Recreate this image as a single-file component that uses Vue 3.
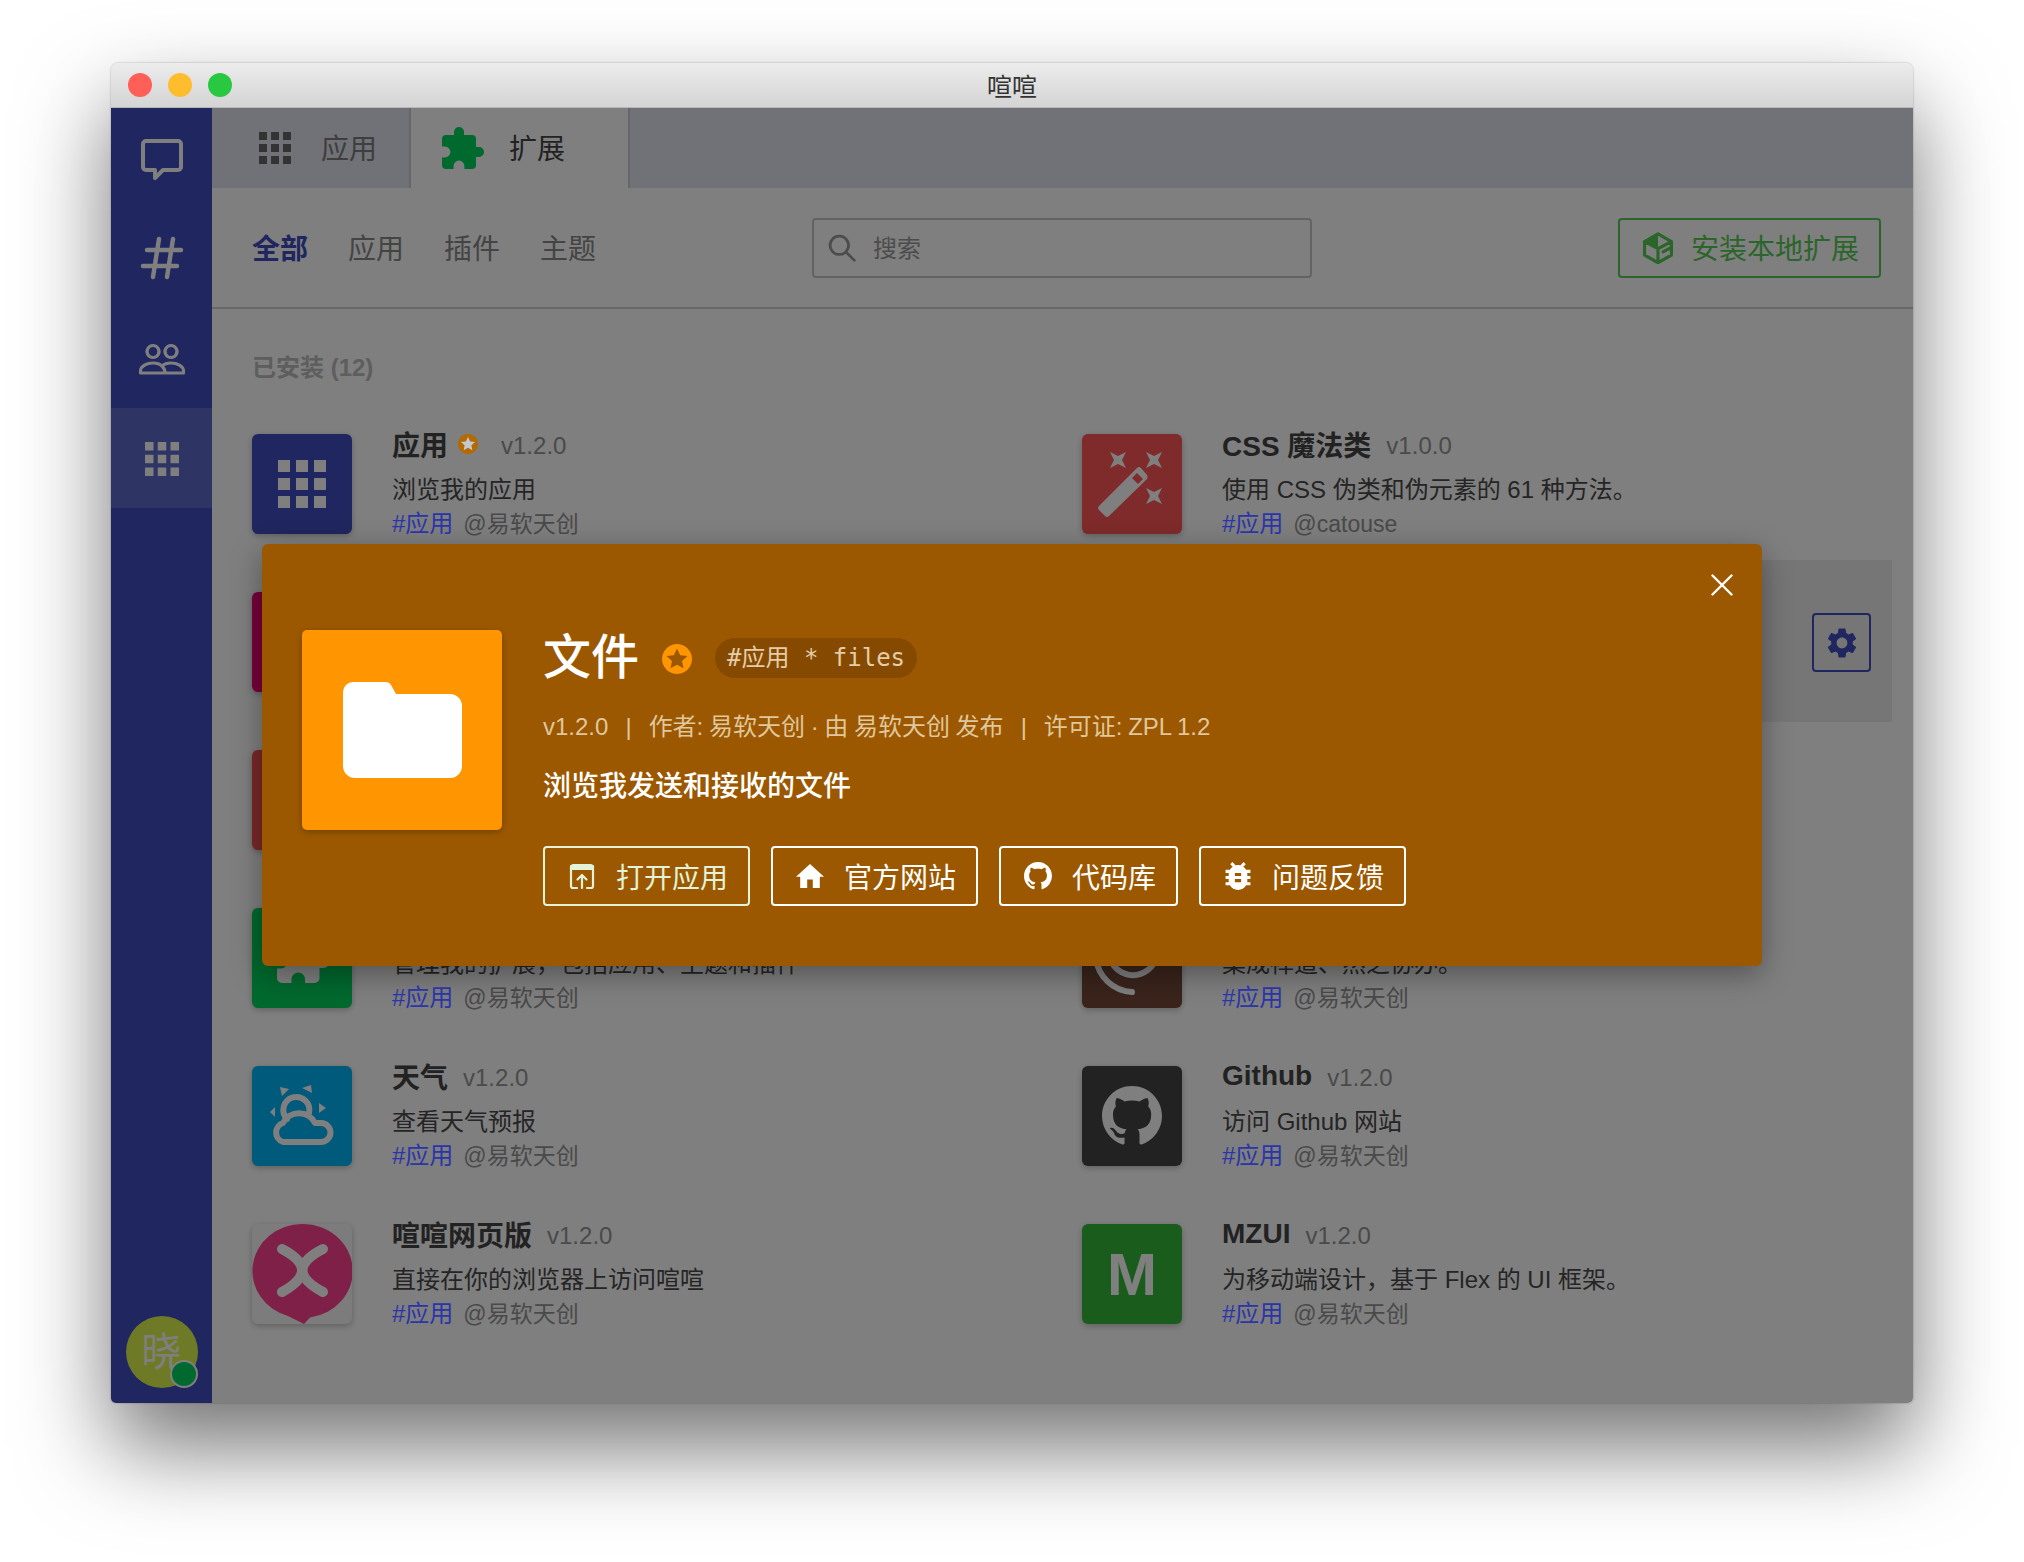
<template>
  <div class="page">
    <div class="window">
      <div class="titlebar">
        <div class="lights"><i class="red"></i><i class="yellow"></i><i class="green"></i></div>
        <span class="title">喧喧</span>
      </div>
      <div class="body">
        <nav class="side">
          <a v-for="n in ['chat', 'hash', 'users', 'grid']" :key="n" class="nav" :class="{ active: n === 'grid' }">
            <Icon :name="n" :class="n === 'grid' ? 'nav-grid' : 'nav-icon'" />
          </a>
          <div class="avatar">晓<span class="dot"></span></div>
        </nav>
        <main class="main">
          <div class="tabs">
            <a class="tab"><Icon name="grid" class="tab-grid" />应用</a>
            <a class="tab on"><Icon name="puzzle" class="tab-puzzle" />扩展</a>
          </div>
          <div class="bar">
            <div class="filters">
              <a v-for="(f, i) in filters" :key="f" :class="{ cur: i === 0 }">{{ f }}</a>
            </div>
            <label class="search">
              <Icon name="search" class="search-icon" />
              <input placeholder="搜索" />
            </label>
            <a class="install"><Icon name="cube" class="cube" />安装本地扩展</a>
          </div>
          <div class="content">
            <h3>已安装 (12)</h3>
            <div class="grid">
              <div v-for="item in items" :key="item.name" class="card" :class="{ hover: item.hover }">
                <div class="app" :style="{ background: item.color }">
                  <Icon :name="item.icon" :class="item.size" />
                  <b v-if="item.letter">{{ item.letter }}</b>
                </div>
                <div class="info">
                  <div class="line">
                    <strong>{{ item.name }}</strong>
                    <Icon v-if="item.star" name="star" class="star" />
                    <span class="ver" :class="{ gap: item.star }">{{ item.ver }}</span>
                  </div>
                  <p>{{ item.desc }}</p>
                  <div class="tags"><a :class="{ lift: !item.covered }">#应用</a><span>@{{ item.by }}</span></div>
                </div>
                <a v-if="item.hover" class="gear"><Icon name="gear" class="gear-icon" /></a>
              </div>
            </div>
          </div>
        </main>
        <div class="mask">
          <div class="dialog">
            <a class="close"><Icon name="close" class="close-icon" /></a>
            <div class="big"><Icon name="folder" class="folder" /></div>
            <div class="detail">
              <div class="head">
                <h2>文件</h2>
                <Icon name="star" class="dstar" />
                <code>#应用 * files</code>
              </div>
              <div class="meta">
                <span>v1.2.0</span><i>|</i><span>作者: 易软天创 · 由 易软天创 发布</span><i>|</i><span>许可证: ZPL 1.2</span>
              </div>
              <div class="desc">浏览我发送和接收的文件</div>
              <div class="actions">
                <a v-for="b in buttons" :key="b.text" class="btn" :class="{ first: b.icon === 'open' }">
                  <Icon :name="b.icon" class="btn-icon" />{{ b.text }}
                </a>
              </div>
            </div>
          </div>
        </div>
      </div>
    </div>
  </div>
</template>

<script setup>
import { h } from 'vue'

const grid = 'M0 0h6v6H0zM9 0h6v6H9zM18 0h6v6h-6zM0 9h6v6H0zM9 9h6v6H9zM18 9h6v6h-6zM0 18h6v6H0zM9 18h6v6H9zM18 18h6v6h-6z'
const github = 'M8 0C3.58 0 0 3.58 0 8c0 3.54 2.29 6.53 5.47 7.59.4.07.55-.17.55-.38 0-.19-.01-.82-.01-1.49-2.01.37-2.53-.49-2.69-.94-.09-.23-.48-.94-.82-1.13-.28-.15-.68-.52-.01-.53.63-.01 1.08.58 1.23.82.72 1.21 1.87.87 2.33.66.07-.52.28-.87.51-1.07-1.78-.2-3.64-.89-3.64-3.95 0-.87.31-1.59.82-2.15-.08-.2-.36-1.02.08-2.12 0 0 .67-.21 2.2.82.64-.18 1.32-.27 2-.27.68 0 1.36.09 2 .27 1.53-1.04 2.2-.82 2.2-.82.44 1.1.16 1.92.08 2.12.51.56.82 1.27.82 2.15 0 3.07-1.87 3.75-3.65 3.95.29.25.54.73.54 1.48 0 1.07-.01 1.93-.01 2.2 0 .21.15.46.55.38A8.013 8.013 0 0016 8c0-4.42-3.58-8-8-8z'
const puzzle = 'M20.5 11H19V7a2 2 0 0 0-2-2h-4V3.5a2.5 2.5 0 0 0-5 0V5H4a2 2 0 0 0-2 2v3.8h1.5a2.7 2.7 0 0 1 0 5.4H2V20a2 2 0 0 0 2 2h3.8v-1.5a2.7 2.7 0 0 1 5.4 0V22H17a2 2 0 0 0 2-2v-4h1.5a2.5 2.5 0 0 0 0-5z'
const starShape = 'M12 3.500l2.500 5.400 5.900.7-4.400 4 1.200 5.800L12 16.500 6.800 19.400l1.200-5.800-4.400-4 5.900-.7Z'
const fourStar = (x, y) => `M${x - 8} ${y - 8}L${x} ${y - 4}L${x + 8} ${y - 8}L${x + 4} ${y}L${x + 8} ${y + 8}L${x} ${y + 4}L${x - 8} ${y + 8}L${x - 4} ${y}Z`

// every icon is a viewBox and a list of paths, filled unless it has a stroke width
const icons = {
  grid: { vb: '0 0 24 24', paths: [{ d: grid }] },
  puzzle: { vb: '2 1 21 21', paths: [{ d: puzzle }] },
  bigpuzzle: { vb: '0 0 24 24', paths: [{ d: puzzle }] },
  github: { vb: '0 0 16 16', paths: [{ d: github }] },
  home: { vb: '2 3 20 17', paths: [{ d: 'M10 20v-6h4v6h5v-8h3L12 3 2 12h3v8z' }] },
  bug: { vb: '3 3 18 18', paths: [{ d: 'M20 8h-2.81a5.985 5.985 0 0 0-1.82-1.96L17 4.41 15.59 3l-2.17 2.17C12.96 5.06 12.49 5 12 5c-.49 0-.96.06-1.41.17L8.41 3 7 4.41l1.62 1.63C7.88 6.55 7.26 7.22 6.81 8H4v2h2.09c-.05.33-.09.66-.09 1v1H4v2h2v1c0 .34.04.67.09 1H4v2h2.81c1.04 1.79 2.97 3 5.19 3s4.15-1.21 5.19-3H20v-2h-2.09c.05-.33.09-.66.09-1v-1h2v-2h-2v-1c0-.34-.04-.67-.09-1H20V8zm-6 8h-4v-2h4v2zm0-4h-4v-2h4v2z' }] },
  gear: { vb: '2 2 20 20', paths: [{ d: 'M19.14 12.94c.04-.3.06-.61.06-.94 0-.32-.02-.64-.07-.94l2.03-1.58a.49.49 0 0 0 .12-.61l-1.92-3.32a.488.488 0 0 0-.59-.22l-2.39.96c-.5-.38-1.03-.7-1.62-.94l-.36-2.54a.484.484 0 0 0-.48-.41h-3.84c-.24 0-.43.17-.47.41l-.36 2.54c-.59.24-1.13.57-1.62.94l-2.39-.96c-.22-.08-.47 0-.59.22L2.74 8.87c-.12.21-.08.47.12.61l2.03 1.58c-.05.3-.09.63-.09.94s.02.64.07.94l-2.03 1.58a.49.49 0 0 0-.12.61l1.92 3.32c.12.22.37.29.59.22l2.39-.96c.5.38 1.03.7 1.62.94l.36 2.54c.05.24.24.41.48.41h3.84c.24 0 .44-.17.47-.41l.36-2.54c.59-.24 1.13-.56 1.62-.94l2.39.96c.22.08.47 0 .59-.22l1.92-3.32c.12-.22.07-.47-.12-.61l-2.01-1.58zM12 15.6c-1.98 0-3.6-1.62-3.6-3.6s1.62-3.6 3.6-3.6 3.6 1.62 3.6 3.6-1.62 3.6-3.6 3.6z' }] },
  chat: { vb: '0 0 48 48', paths: [{ sw: 4, d: 'M8 7H40a3 3 0 0 1 3 3V33a3 3 0 0 1-3 3H25L17 44V36H8a3 3 0 0 1-3-3V10a3 3 0 0 1 3-3Z' }] },
  hash: { vb: '0 0 48 48', paths: [{ sw: 4.5, d: 'M21 5L15 43M35 5L29 43M9 16H43M5 32H39' }] },
  users: { vb: '0 -2 48 48', paths: [{ sw: 3.2, d: 'M15 9.5a6 6 0 1 0 .01 0ZM33 9.5a6 6 0 1 0 .01 0ZM2.5 37V35C2.5 30 9 27 15 27C19 27 22 28 24 30C26 28 29 27 33 27C39 27 45.500 30 45.500 35V37ZM24 30C26 32 27 34 27 37' }] },
  search: { vb: '0 0 26 26', paths: [{ sw: 2.6, d: 'M10.500 2a8.500 8.500 0 1 0 .01 0ZM16.500 16.500L24.500 24.500' }] },
  cube: { vb: '0 0 100 100', paths: [{ d: 'M50 6L8 30L50 52Z' }, { sw: 10, d: 'M50 6L92 30V72L50 96L8 72V30ZM8 30L50 52L92 30M50 52V96M66 62L92 48' }] },
  star: { vb: '0 0 24 24', paths: [{ rule: 'evenodd', d: 'M12 0a12 12 0 1 0 .01 0Z' + starShape }, { fill: 'var(--star-in, none)', d: starShape }] },
  close: { vb: '0 0 22 22', paths: [{ sw: 2.400, d: 'M1.500 1.500L20.500 20.500M20.500 1.500L1.500 20.500' }] },
  folder: { vb: '0 0 119 96', paths: [{ d: 'M10 0H42C45 0 47 1 48 3L53 12H107A12 12 0 0 1 119 24V84A12 12 0 0 1 107 96H12A12 12 0 0 1 0 84V10A10 10 0 0 1 10 0Z' }] },
  open: { vb: '0 0 28 28', paths: [{ d: 'M3 4a2 2 0 0 1 2-2H23a2 2 0 0 1 2 2V8H3Z' }, { sw: 2.200, d: 'M9 26H5a2 2 0 0 1-2-2V4M25 4V24a2 2 0 0 1-2 2H19M14 26V13M9.500 17.500L14 13L18.500 17.500' }] },
  wand: { vb: '0 0 100 100', paths: [{ rule: 'evenodd', d: 'M17 72L55 34Q57 32 59 34L65 41Q66 43 65 45L27 82Q25 84 23 82L17 76Q15 74 17 72ZM55 39L50 44L56 50L61 45Z' }, { d: fourStar(36, 26) + fourStar(72, 26) + fourStar(72, 62) }] },
  weather: { vb: '0 0 100 100', paths: [{ sw: 6, d: 'M35 53A13 13 0 1 1 57 47M31 76A10 10 0 0 1 31 57A18 18 0 0 1 63 57H69A9.500 9.500 0 0 1 69 76Z' }, { d: 'M28 21L37 23L30 30ZM50 22L59 19L60 27ZM67 37L74 42L67 47ZM18 46L23 41L23 51Z' }] },
  logo: { vb: '0 0 100 100', paths: [{ fill: '#ff4090', d: 'M50 0A50 47 0 0 1 58 93.500L52 100L36 92A50 47 0 0 1 50 0Z' }, { sw: 10, d: 'M30 25Q70 46 30 68M71 25Q30 46 71 68' }] },
  swirl: { vb: '0 0 100 100', paths: [{ sw: 6, d: 'M28 50A24 24 0 0 0 74 50M14 50A38 38 0 0 0 50 84' }] },
  none: { vb: '0 0 1 1', paths: [] },
}

const Icon = props => {
  const ic = icons[props.name]
  return h('svg', { viewBox: ic.vb, xmlns: 'http://www.w3.org/2000/svg' }, ic.paths.map(p => h('path', {
    d: p.d,
    fill: p.sw ? 'none' : p.fill || 'currentColor',
    stroke: p.sw ? 'currentColor' : 'none',
    'stroke-width': p.sw,
    'stroke-linejoin': 'round',
    'stroke-linecap': 'round',
    'fill-rule': p.rule,
  })))
}
Icon.props = ['name']

const filters = ['全部', '应用', '插件', '主题']
const soft = '易软天创'
const items = [
  { name: '应用', star: true, ver: 'v1.2.0', desc: '浏览我的应用', by: soft, color: '#404cbe', icon: 'grid', size: 'i48' },
  { name: 'CSS 魔法类', ver: 'v1.0.0', desc: '使用 CSS 伪类和伪元素的 61 种方法。', by: 'catouse', color: '#fe5457', icon: 'wand', size: 'full' },
  { name: '便签', ver: 'v1.2.0', desc: '记录我的想法和待办', by: soft, color: '#ee0474', icon: 'none', size: 'full', covered: true },
  { name: '文件', ver: 'v1.2.0', desc: '浏览我发送和接收的文件', by: soft, color: '#ff9500', icon: 'folder', size: 'i48', hover: true, covered: true },
  { name: '截图', ver: 'v1.2.0', desc: '截取屏幕并发送', by: soft, color: '#f25050', icon: 'none', size: 'full', covered: true },
  { name: '主题', ver: 'v1.2.0', desc: '更换界面外观', by: soft, color: '#7b61d8', icon: 'none', size: 'full', covered: true },
  { name: '扩展', ver: 'v1.2.0', desc: '管理我的扩展，包括应用、主题和插件', by: soft, color: '#00d25c', icon: 'bigpuzzle', size: 'i60' },
  { name: '禅道', ver: 'v1.2.0', desc: '集成禅道、然之协办。', by: soft, color: '#744838', icon: 'swirl', size: 'full' },
  { name: '天气', ver: 'v1.2.0', desc: '查看天气预报', by: soft, color: '#00b4f8', icon: 'weather', size: 'full' },
  { name: 'Github', ver: 'v1.2.0', desc: '访问 Github 网站', by: soft, color: '#444', icon: 'github', size: 'i60' },
  { name: '喧喧网页版', ver: 'v1.2.0', desc: '直接在你的浏览器上访问喧喧', by: soft, color: '#f8f8f8', icon: 'logo', size: 'full' },
  { name: 'MZUI', ver: 'v1.2.0', desc: '为移动端设计，基于 Flex 的 UI 框架。', by: soft, color: '#34b838', icon: 'none', size: 'full', letter: 'M' },
]
const buttons = [
  { icon: 'open', text: '打开应用' },
  { icon: 'home', text: '官方网站' },
  { icon: 'github', text: '代码库' },
  { icon: 'bug', text: '问题反馈' },
]
</script>

<style scoped>
.page {
  width: 2024px;
  height: 1562px;
  box-sizing: border-box;
  padding: 63px 111px 159px;
  background: #fff;
  overflow: hidden;
  font-family: "Liberation Sans", "Noto Sans CJK SC", sans-serif;
}
.window {
  height: 100%;
  display: flex;
  flex-direction: column;
  border-radius: 8px 8px 5px 5px;
  box-shadow: 0 44px 90px rgba(0, 0, 0, .55), 0 0 2px rgba(0, 0, 0, .35);
  overflow: hidden;
}
.titlebar {
  height: 45px;
  flex: none;
  position: relative;
  display: flex;
  align-items: center;
  justify-content: center;
  background: linear-gradient(#ececec, #d4d4d4);
  border-bottom: 1px solid #b8b8b8;
  box-sizing: border-box;
}
.lights {
  position: absolute;
  left: 17px;
  display: flex;
  gap: 16px;
}
.lights i {
  width: 24px;
  height: 24px;
  border-radius: 50%;
}
.red { background: #ff5f57; }
.yellow { background: #ffbd2e; }
.green { background: #28c940; }
.title {
  font-size: 25px;
  color: #333;
}
.body {
  flex: 1;
  display: flex;
  position: relative;
  min-height: 0;
}
.side {
  width: 101px;
  flex: none;
  display: flex;
  flex-direction: column;
  background: #404cbe;
  padding-bottom: 15px;
  box-sizing: border-box;
}
.nav {
  height: 100px;
  display: flex;
  align-items: center;
  justify-content: center;
  color: #fff;
}
.nav.active { background: #5c68c6; }
.nav-icon { width: 48px; height: 48px; }
.nav-grid { width: 34px; height: 34px; margin-top: 2px; }
.avatar {
  margin: auto auto 0;
  width: 72px;
  height: 72px;
  border-radius: 50%;
  background: #def44c;
  color: #fff;
  font-size: 40px;
  line-height: 72px;
  text-align: center;
  position: relative;
}
.dot {
  position: absolute;
  right: 0;
  bottom: 0;
  width: 28px;
  height: 28px;
  box-sizing: border-box;
  border-radius: 50%;
  border: 2px solid #fff;
  background: #00d260;
}
.main {
  flex: 1;
  min-width: 0;
  background: #fff;
  display: flex;
  flex-direction: column;
}
.tabs {
  height: 80px;
  flex: none;
  display: flex;
  background: #e2e4ee;
}
.tab {
  display: flex;
  align-items: center;
  width: 199px;
  box-sizing: border-box;
  padding: 0 0 2px 47px;
  font-size: 28px;
  color: #7c7c7c;
  border-right: 2px solid #ccced6;
}
.tab.on {
  width: 219px;
  padding-left: 31px;
  background: #fff;
  color: #444;
}
.tab-grid { width: 32px; height: 32px; margin: 2px 30px 0 0; color: #666; }
.tab-puzzle { width: 42px; height: 42px; margin: 2px 25px 0 0; color: #00d25c; }
.bar {
  height: 121px;
  flex: none;
  box-sizing: border-box;
  display: flex;
  align-items: center;
  padding: 0 32px 0 40px;
  border-bottom: 2px solid #d0d0d0;
}
.filters {
  display: flex;
  gap: 40px;
  padding-bottom: 2px;
  font-size: 28px;
  color: #888;
}
.filters .cur {
  color: #404cbe;
  font-weight: 700;
}
.search {
  margin-left: 216px;
  width: 500px;
  height: 60px;
  box-sizing: border-box;
  display: flex;
  align-items: center;
  padding-left: 14px;
  gap: 17px;
  border: 2px solid #c6c6c6;
  border-radius: 4px;
  color: #999;
}
.search-icon { width: 28px; height: 28px; flex: none; }
.search input {
  border: 0;
  outline: 0;
  background: none;
  width: 300px;
  padding: 2px 0 0;
  font: 24px "Liberation Sans", "Noto Sans CJK SC", sans-serif;
}
.search input::placeholder { color: #999; }
.install {
  margin-left: auto;
  width: 263px;
  height: 60px;
  box-sizing: border-box;
  display: flex;
  align-items: center;
  padding: 0 0 2px 22px;
  gap: 17px;
  border: 2px solid #56ca54;
  border-radius: 4px;
  color: #56ca54;
  font-size: 28px;
}
.cube { width: 32px; height: 32px; flex: none; margin-top: 2px; }
.content {
  padding: 0 0 0 20px;
}
h3 {
  margin: 41px 0 0 20px;
  height: 36px;
  font-size: 24px;
  line-height: 36px;
  font-weight: 700;
  color: #bcbcbc;
}
.grid {
  display: grid;
  grid-template-columns: 830px 830px;
  margin-top: 16px;
}
.card {
  height: 162px;
  margin-bottom: -4px;
  box-sizing: border-box;
  padding: 32px 20px 0;
  display: flex;
  gap: 40px;
  position: relative;
}
.card.hover { background: #ececec; }
.app {
  width: 100px;
  height: 100px;
  flex: none;
  border-radius: 6px;
  display: flex;
  align-items: center;
  justify-content: center;
  color: #fff;
  box-shadow: 0 2px 6px rgba(0, 0, 0, .25);
}
.app b {
  font-size: 60px;
  position: absolute;
}
.full { width: 100px; height: 100px; }
.i48 { width: 48px; height: 48px; }
.i60 { width: 60px; height: 60px; }
.info {
  margin-top: -9px;
  min-width: 0;
}
.line {
  display: flex;
  align-items: center;
  height: 40px;
  font-size: 28px;
}
.line strong { color: #444; margin-top: -3px; }
.star {
  width: 20px;
  height: 20px;
  margin: -2px 7px 0 10px;
  color: #b46a00;
  --star-in: #c8c8c8;
  position: relative;
  z-index: 2;
}
.ver {
  margin: 1px 0 0 15px;
  font-size: 24px;
  color: #949494;
}
.ver.gap { margin-left: 16px; }
.card p {
  margin: 8px 0 0;
  font-size: 24px;
  line-height: 34px;
  color: #4a4a4a;
}
.tags {
  display: flex;
  align-items: baseline;
  gap: 10px;
  font-size: 24px;
  line-height: 34px;
  color: #949494;
}
.tags span { font-size: 23px; }
.tags a { color: #5468ff; }
.tags a.lift {
  color: #2a35aa;
  position: relative;
  z-index: 2;
}
.gear {
  position: absolute;
  right: 21px;
  top: 53px;
  width: 59px;
  height: 59px;
  box-sizing: border-box;
  display: flex;
  align-items: center;
  justify-content: center;
  border: 2px solid #404cbe;
  border-radius: 4px;
  color: #404cbe;
}
.gear-icon { width: 30px; height: 30px; }
.mask {
  position: absolute;
  inset: 0;
  z-index: 1;
  display: flex;
  justify-content: center;
  align-items: flex-start;
  padding-top: 436px;
  background: rgba(0, 0, 0, .5);
}
.dialog {
  width: 1500px;
  height: 422px;
  box-sizing: border-box;
  padding: 86px 40px 0;
  display: flex;
  gap: 41px;
  position: relative;
  border-radius: 6px;
  background: #9b5800;
  color: #fff;
  box-shadow: 0 8px 30px rgba(0, 0, 0, .35);
}
.close {
  position: absolute;
  right: 29px;
  top: 30px;
  display: flex;
}
.close-icon { width: 22px; height: 22px; }
.big {
  width: 200px;
  height: 200px;
  flex: none;
  display: flex;
  align-items: center;
  justify-content: center;
  background: #ff9500;
  border-radius: 5px;
  box-shadow: 0 2px 6px rgba(0, 0, 0, .25);
}
.folder { width: 119px; height: 96px; }
.detail { margin-top: -2px; }
.head {
  display: flex;
  align-items: center;
  height: 60px;
}
h2 {
  margin: 0;
  font-size: 48px;
  font-weight: 500;
  line-height: 60px;
}
.dstar {
  width: 30px;
  height: 30px;
  margin: 2px 23px 0 23px;
  color: #ff9500;
}
code {
  height: 40px;
  line-height: 40px;
  padding: 0 12px;
  border-radius: 20px;
  background: #854a00;
  color: #e4cda8;
  font-family: "DejaVu Sans Mono", "Noto Sans CJK SC", monospace;
  font-size: 24px;
}
.meta {
  margin-top: 22px;
  display: flex;
  gap: 17px;
  font-size: 24px;
  line-height: 34px;
  color: #e0c79c;
  word-spacing: -1px;
}
.meta i { font-style: normal; }
.desc {
  margin-top: 23px;
  font-size: 28px;
  line-height: 40px;
  font-weight: 500;
}
.actions {
  margin-top: 39px;
  display: flex;
  gap: 21px;
}
.btn {
  height: 60px;
  box-sizing: border-box;
  display: flex;
  align-items: center;
  gap: 20px;
  padding: 0 20px 0 23px;
  border: 2px solid #fff;
  border-radius: 4px;
  font-size: 28px;
}
.btn.first {
  border-color: #e2f3d8;
  color: #e2f3d8;
}
.btn-icon { width: 28px; height: 28px; flex: none; }
</style>

<style>
body { margin: 0; background: #fff; }
</style>
